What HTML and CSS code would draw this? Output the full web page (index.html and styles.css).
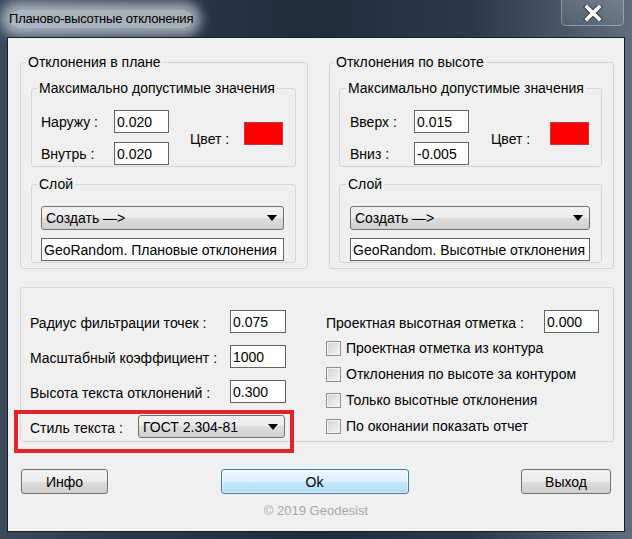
FILE: index.html
```html
<!DOCTYPE html>
<html lang="ru">
<head>
  <meta charset="UTF-8" />
  <title>Планово-высотные отклонения</title>
  <link rel="stylesheet" href="styles.css">
</head>
<body>
  <div class="window">
    <div class="titlebar">
      <span class="title">Планово-высотные отклонения</span>
      <button class="close-btn">
        <svg width="20" height="16" viewBox="0 0 20 16">
          <path d="M4 2 L16 14 M16 2 L4 14" stroke="#3a4654" stroke-width="6" stroke-linecap="square"/>
          <path d="M4 2 L16 14 M16 2 L4 14" stroke="#fff" stroke-width="3.6" stroke-linecap="square"/>
        </svg>
      </button>
    </div>

    <div class="client">
      <div class="top-row">
        <fieldset class="group outer plan">
          <legend>Отклонения в плане</legend>
          <fieldset class="group limits">
            <legend>Максимально допустимые значения</legend>
            <div class="limits-body">
              <div class="pairs">
                <label>Наружу :</label><input class="field" value="0.020">
                <label>Внутрь :</label><input class="field" value="0.020">
              </div>
              <span class="color-label">Цвет :</span>
              <span class="swatch"></span>
            </div>
          </fieldset>
          <fieldset class="group layer">
            <legend>Слой</legend>
            <div class="combo">Создать —&gt;</div>
            <input class="field layer-name" value="GeoRandom. Плановые отклонения">
          </fieldset>
        </fieldset>

        <fieldset class="group outer height">
          <legend>Отклонения по высоте</legend>
          <fieldset class="group limits">
            <legend>Максимально допустимые значения</legend>
            <div class="limits-body">
              <div class="pairs">
                <label>Вверх :</label><input class="field" value="0.015">
                <label>Вниз :</label><input class="field" value="-0.005">
              </div>
              <span class="color-label">Цвет :</span>
              <span class="swatch"></span>
            </div>
          </fieldset>
          <fieldset class="group layer">
            <legend>Слой</legend>
            <div class="combo">Создать —&gt;</div>
            <input class="field layer-name" value="GeoRandom. Высотные отклонения">
          </fieldset>
        </fieldset>
      </div>

      <div class="group params">
        <div class="params-left">
          <div class="row"><label>Радиус фильтрации точек :</label><input class="field" value="0.075"></div>
          <div class="row"><label>Масштабный коэффициент :</label><input class="field" value="1000"></div>
          <div class="row"><label>Высота текста отклонений :</label><input class="field" value="0.300"></div>
          <div class="row style-row"><label>Стиль текста :</label><div class="combo">ГОСТ 2.304-81</div></div>
        </div>
        <div class="params-right">
          <div class="row"><label>Проектная высотная отметка :</label><input class="field" value="0.000"></div>
          <div class="check"><span class="box"></span>Проектная отметка из контура</div>
          <div class="check"><span class="box"></span>Отклонения по высоте за контуром</div>
          <div class="check"><span class="box"></span>Только высотные отклонения</div>
          <div class="check"><span class="box"></span>По оконании показать отчет</div>
        </div>
      </div>

      <div class="highlight"></div>

      <div class="buttons">
        <button class="btn info">Инфо</button>
        <button class="btn ok">Ok</button>
        <button class="btn exit">Выход</button>
      </div>
      <div class="copyright">© 2019 Geodesist</div>
    </div>
  </div>
</body>
</html>
```

FILE: styles.css
```css
body {
  margin: 0;
  font-family: "Liberation Sans", Arial, sans-serif;
  font-size: 14px;
  color: #000;
}
.window {
  width: 632px;
  height: 539px;
  background: linear-gradient(90deg, #3a4a5b 0%, #2a3949 20%, #1f2d3b 50%, #2b3a49 75%, #5f6e7c 100%);
  overflow: hidden;
}
.titlebar {
  height: 38px;
  display: flex;
  justify-content: space-between;
  align-items: flex-start;
  padding: 0 8px 0 9px;
  box-sizing: border-box;
}
.title {
  margin-top: 10px;
  font-size: 13px;
  letter-spacing: -0.2px;
  line-height: 18px;
  background: rgba(210, 218, 226, 0.75);
  box-shadow: 0 0 12px 8px rgba(210, 218, 226, 0.7);
  border-radius: 10px;
}
.close-btn {
  width: 63px;
  height: 26px;
  padding: 0;
  border: 1px solid rgba(255, 255, 255, 0.3);
  border-top: none;
  border-radius: 0 0 5px 5px;
  background: linear-gradient(rgba(255, 255, 255, 0.14), rgba(255, 255, 255, 0.06));
  display: flex;
  align-items: center;
  justify-content: center;
}
.client {
  position: relative;
  margin: 0 8px;
  height: 493px;
  padding-top: 16px;
  box-sizing: border-box;
  background: #f0f0f0;
  box-shadow: 0 0 0 1px #141f2a;
}
.top-row {
  display: flex;
  gap: 21px;
  padding-left: 12px;
}
.group {
  margin: 0;
  border: 1px solid #d6d6d6;
  border-radius: 3px;
  min-width: 0;
  box-sizing: border-box;
}
legend {
  padding: 0 2px;
  line-height: 16px;
  margin-left: -4px;
}
.outer {
  padding: 10px 11px 5px 10px;
}
.outer > legend {
  margin-left: -5px;
}
.plan {
  width: 288px;
}
.height {
  width: 285px;
  padding-left: 9px;
}
.limits {
  padding: 14px 0 1px 9px;
}
.layer {
  margin-top: 9px;
  padding: 14px 11px 1px 9px;
}
.height .limits {
  padding-left: 10px;
}
.height .layer {
  padding-left: 10px;
}
.limits-body {
  display: flex;
  align-items: center;
}
.pairs {
  display: grid;
  grid-template-columns: 73px 55px;
  row-gap: 9px;
}
.height .pairs {
  grid-template-columns: 64px 55px;
}
.pairs label {
  padding-top: 4px;
}
.field {
  height: 23px;
  box-sizing: border-box;
  border: 1px solid #646464;
  background: #fff;
  padding: 0 2px;
  margin: 0;
  font: inherit;
  color: #000;
}
.color-label {
  margin-left: 21px;
  width: 54px;
  padding-top: 3px;
}
.height .color-label {
  margin-left: 22px;
  width: 59px;
}
.swatch {
  width: 39px;
  height: 23px;
  box-sizing: border-box;
  background: #ff0000;
  border: 1px solid #c43a3a;
  margin-bottom: 9px;
}
.combo {
  height: 24px;
  box-sizing: border-box;
  border: 1px solid #707070;
  border-radius: 3px;
  background: linear-gradient(#f2f2f2 0%, #ebebeb 50%, #dddddd 50%, #cfcfcf 100%);
  display: flex;
  align-items: center;
  justify-content: space-between;
  padding: 0 6px 0 4px;
}
.combo::after {
  content: "";
  border-left: 5px solid transparent;
  border-right: 5px solid transparent;
  border-top: 6px solid #000;
}
.layer-name {
  width: 100%;
  margin-top: 8px;
}
.params {
  margin: 18px 10px 0 12px;
  padding: 22px 0 2px 9px;
  display: flex;
}
.params-left {
  width: 296px;
}
.row {
  display: flex;
  align-items: center;
  height: 23px;
  margin-bottom: 12px;
}
.row label {
  width: 200px;
  padding-top: 3px;
}
.row .field {
  width: 56px;
}
.style-row {
  margin: 2px 0 0;
}
.style-row label {
  width: 108px;
}
.style-row .combo {
  width: 147px;
  height: 23px;
}
.params-right .row {
  margin-bottom: 2px;
}
.params-right .row label {
  width: 218px;
}
.params-right .row .field {
  width: 55px;
}
.check {
  display: flex;
  align-items: center;
  height: 26px;
}
.box {
  width: 15px;
  height: 15px;
  box-sizing: border-box;
  border: 1px solid #8e8f8f;
  background: linear-gradient(135deg, #cfd2d6, #f5f5f5);
  box-shadow: inset 0 0 0 1px #f4f4f4;
  margin-right: 5px;
}
.highlight {
  position: absolute;
  left: 6px;
  top: 372px;
  width: 280px;
  height: 43px;
  box-sizing: border-box;
  border: 4px solid #e3232b;
}
.buttons {
  display: flex;
  justify-content: space-between;
  padding: 0 13px;
  margin-top: 27px;
}
.btn {
  height: 25px;
  border: 1px solid #707070;
  border-radius: 3px;
  background: linear-gradient(#f2f2f2 0%, #ebebeb 50%, #dddddd 50%, #cfcfcf 100%);
  font: inherit;
  color: #000;
  padding: 0;
}
.info {
  width: 87px;
}
.ok {
  width: 188px;
  border-color: #3c7fb1;
  background: linear-gradient(#ebf7fe 0%, #dcf1fd 50%, #c4e7fb 50%, #b2dcf4 100%);
  box-shadow: inset 0 0 0 1px rgba(255, 255, 255, 0.5);
}
.exit {
  width: 90px;
}
.copyright {
  margin-top: 9px;
  text-align: center;
  line-height: 16px;
  font-size: 13px;
  color: #a8a8a8;
}
```
